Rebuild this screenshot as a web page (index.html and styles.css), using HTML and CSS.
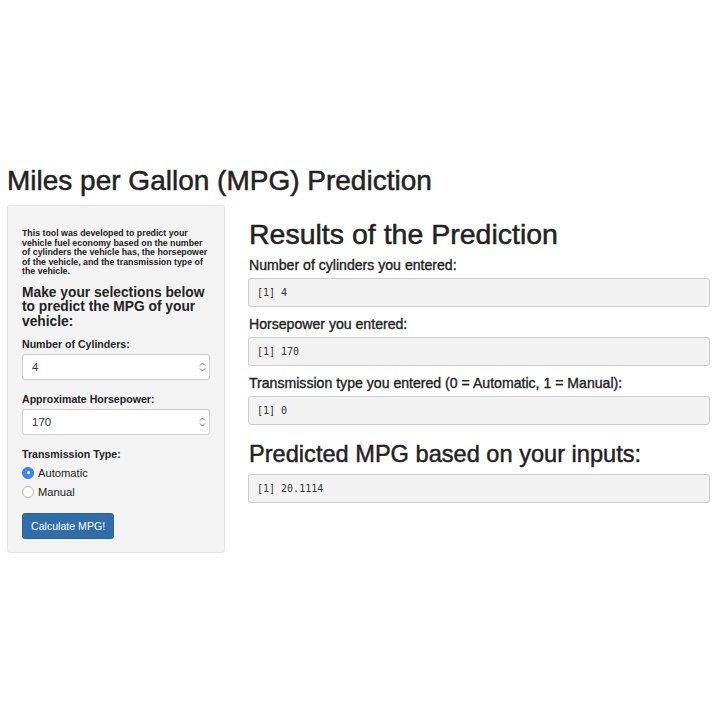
FILE: index.html
```html
<!DOCTYPE html>
<html>
<head>
<meta charset="utf-8">
<title>MPG Prediction</title>
<link rel="stylesheet" href="styles.css">
</head>
<body>
<div class="page">
  <h1 class="title">Miles per Gallon (MPG) Prediction</h1>
  <div class="row">
    <aside class="well">
      <h6 class="intro">This tool was developed to predict your vehicle fuel economy based on the number of cylinders the vehicle has, the horsepower of the vehicle, and the transmission type of the vehicle.</h6>
      <h4 class="lead">Make your selections below to predict the MPG of your vehicle:</h4>
      <div class="group">
        <label class="ctl-label">Number of Cylinders:</label>
        <div class="num">
          <input class="num-input" type="text" value="4">
          <svg class="spin" width="7" height="12" viewBox="0 0 7 12"><path d="M1 4.5 L3.5 2 L6 4.5 M1 7.5 L3.5 10 L6 7.5" fill="none" stroke="#777" stroke-width="1"/></svg>
        </div>
      </div>
      <div class="group">
        <label class="ctl-label">Approximate Horsepower:</label>
        <div class="num">
          <input class="num-input" type="text" value="170">
          <svg class="spin" width="7" height="12" viewBox="0 0 7 12"><path d="M1 4.5 L3.5 2 L6 4.5 M1 7.5 L3.5 10 L6 7.5" fill="none" stroke="#777" stroke-width="1"/></svg>
        </div>
      </div>
      <div class="group">
        <label class="ctl-label">Transmission Type:</label>
        <div class="radio first"><span class="dot on"></span>Automatic</div>
        <div class="radio"><span class="dot"></span>Manual</div>
      </div>
      <button class="btn">Calculate MPG!</button>
    </aside>
    <main class="main">
      <h1 class="head">Results of the Prediction</h1>
      <h4 class="sub">Number of cylinders you entered:</h4>
      <pre class="out">[1] 4</pre>
      <h4 class="sub">Horsepower you entered:</h4>
      <pre class="out">[1] 170</pre>
      <h4 class="sub">Transmission type you entered (0 = Automatic, 1 = Manual):</h4>
      <pre class="out">[1] 0</pre>
      <h2 class="head2">Predicted MPG based on your inputs:</h2>
      <pre class="out">[1] 20.1114</pre>
    </main>
  </div>
</div>
</body>
</html>
```

FILE: styles.css
```css
html, body {
  margin: 0;
  padding: 0;
  background: #fff;
}
body {
  font-family: "Liberation Sans", Arial, Helvetica, sans-serif;
  color: #333;
}
.page {
  padding: 165px 10px 0 7px;
}
.title {
  font-size: 28px;
  font-weight: 500;
  line-height: 32px;
  margin: 0 0 8px 0;
  color: #222;
  -webkit-text-stroke: 0.5px #222;
}
.row {
  display: flex;
  align-items: flex-start;
  gap: 23px;
}
.well {
  width: 218px;
  box-sizing: border-box;
  background: #f3f3f3;
  border: 1px solid #e3e3e3;
  border-radius: 3px;
  padding: 15px 14px 13px 14px;
}
.intro {
  font-size: 8.8px;
  font-weight: bold;
  line-height: 9.6px;
  margin: 8px 0 9px 0;
  color: #222;
}
.lead {
  font-size: 13.8px;
  font-weight: bold;
  line-height: 14.5px;
  margin: 0 0 8px 0;
  color: #222;
}
.group {
  margin-bottom: 12px;
}
.ctl-label {
  display: block;
  font-size: 10.6px;
  font-weight: bold;
  line-height: 14px;
  margin-bottom: 3px;
  color: #222;
}
.num {
  display: flex;
  align-items: center;
  height: 26px;
  box-sizing: border-box;
  background: #fff;
  border: 1px solid #ccc;
  border-radius: 3px;
  padding: 0 3px 0 9px;
}
.num-input {
  flex: 1;
  min-width: 0;
  border: none;
  outline: none;
  background: transparent;
  padding: 0;
  font-family: "Liberation Sans", Arial, sans-serif;
  font-size: 11.5px;
  color: #333;
}
.spin {
  display: block;
}
.radio {
  display: flex;
  align-items: center;
  font-size: 11.2px;
  line-height: 14px;
  height: 19px;
  color: #222;
}
.radio.first {
  margin-top: -1px;
}
.dot {
  width: 12px;
  height: 12px;
  box-sizing: border-box;
  border-radius: 50%;
  border: 1px solid #b5b5b5;
  background: #fff;
  margin-right: 4px;
  position: relative;
}
.dot.on {
  background: #3a86f2;
  border-color: #3278e0;
}
.dot.on::after {
  content: "";
  position: absolute;
  left: 3.5px;
  top: 3.5px;
  width: 3px;
  height: 3px;
  border-radius: 50%;
  background: #fff;
}
.btn {
  display: block;
  height: 26px;
  padding: 0 8px;
  margin-top: 7px;
  background: #2f6dab;
  border: 1px solid #2a619a;
  border-radius: 3px;
  color: #fff;
  font-family: "Liberation Sans", Arial, sans-serif;
  font-size: 10.6px;
}
.main {
  flex: 1;
  min-width: 0;
}
.head {
  font-size: 28.5px;
  font-weight: 500;
  line-height: 32px;
  margin: 13px 0 7px 1px;
  color: #222;
  -webkit-text-stroke: 0.5px #222;
}
.head2 {
  font-size: 23.6px;
  font-weight: 500;
  line-height: 28px;
  margin: 15px 0 6px 1px;
  color: #222;
  -webkit-text-stroke: 0.45px #222;
}
.sub {
  font-size: 14.1px;
  font-weight: 500;
  line-height: 16px;
  margin: 0 0 5px 1px;
  color: #222;
  -webkit-text-stroke: 0.35px #222;
}
.out {
  margin: 0 0 9px 0;
  height: 29px;
  box-sizing: border-box;
  padding: 0 8px;
  line-height: 27px;
  background: #f2f2f2;
  border: 1px solid #ccc;
  border-radius: 3px;
  font-family: "DejaVu Sans Mono", "Liberation Mono", monospace;
  font-size: 10px;
  color: #333;
}
```
